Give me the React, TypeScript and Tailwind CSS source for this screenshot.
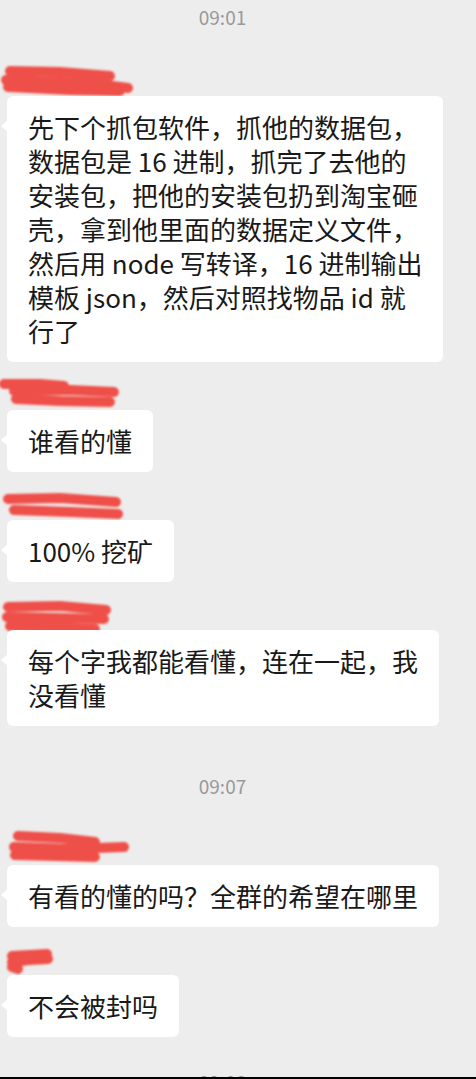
import React from "react";

type Pt = [number, number];

type Message = {
    scribble: Pt[][];
    lines: string[];
};

// name redaction strokes, coordinates local to the 30px name row
const messagesA: Message[] = [
    {
        scribble: [
            [[10, 5], [60, 6], [110, 10]],
            [[6, 14], [90, 17], [128, 22]],
            [[8, 21], [70, 24], [120, 25]],
        ],
        lines: [
            "先下个抓包软件，抓他的数据包，",
            "数据包是 16 进制，抓完了去他的",
            "安装包，把他的安装包扔到淘宝砸",
            "壳，拿到他里面的数据定义文件，",
            "然后用 node 写转译，16 进制输出",
            "模板 json，然后对照找物品 id 就",
            "行了",
        ],
    },
    {
        scribble: [
            [[4, 4], [40, 4], [64, 6]],
            [[14, 11], [70, 10], [114, 12]],
            [[16, 19], [60, 21], [110, 22]],
        ],
        lines: ["谁看的懂"],
    },
    {
        scribble: [
            [[8, 9], [60, 8], [116, 12]],
            [[14, 20], [70, 22], [118, 24]],
        ],
        lines: ["100% 挖矿"],
    },
    {
        scribble: [
            [[8, 7], [60, 6], [106, 10]],
            [[7, 17], [55, 18], [104, 19]],
            [[10, 26], [50, 27], [95, 29]],
        ],
        lines: ["每个字我都能看懂，连在一起，我", "没看懂"],
    },
];

const messagesB: Message[] = [
    {
        scribble: [
            [[18, 1], [60, 3], [95, 7]],
            [[14, 12], [70, 14], [124, 12]],
            [[15, 20], [55, 21], [95, 22]],
        ],
        lines: ["有看的懂的吗？全群的希望在哪里"],
    },
    {
        scribble: [
            [[12, 11], [30, 10], [47, 9]],
            [[12, 17], [30, 15], [48, 14]],
            [[12, 22], [18, 24]],
        ],
        lines: ["不会被封吗"],
    },
];

function Scribble({ strokes }: { strokes: Pt[][] }) {
    return (
        <svg width="140" height="30" viewBox="0 0 140 30" className="overflow-visible">
            <defs>
                <filter id="soft" filterUnits="userSpaceOnUse" x="-10" y="-15" width="160" height="60">
                    <feGaussianBlur stdDeviation="0.8" />
                </filter>
            </defs>
            <g filter="url(#soft)">
                {strokes.map((s, i) => (
                    <polyline
                        key={i}
                        points={s.map((p) => p.join(",")).join(" ")}
                        fill="none"
                        stroke="#ef5049"
                        strokeWidth="10"
                        strokeLinecap="round"
                        strokeLinejoin="round"
                    />
                ))}
            </g>
        </svg>
    );
}

function Time({ label, className }: { label: string; className?: string }) {
    return (
        <div className={`w-[445px] shrink-0 text-center text-[19px] leading-[24px] text-[#999999] ${className ?? ""}`}>
            {label}
        </div>
    );
}

function Bubble({ msg, className }: { msg: Message; className?: string }) {
    return (
        <div className={`flex flex-col shrink-0 ${className ?? ""}`}>
            <div className="h-[30px]">
                <Scribble strokes={msg.scribble} />
            </div>
            <div className="relative ml-[7px] w-fit rounded-md bg-white px-[21px] py-[14px] text-[26px] leading-[34px] text-[#191919]">
                {/* left tail */}
                <div className="absolute left-[-6px] top-[24px] h-0 w-0 border-y-[6px] border-r-[7px] border-y-transparent border-r-white" />
                {msg.lines.map((line, i) => (
                    <div key={i} className="whitespace-nowrap">
                        {line}
                    </div>
                ))}
            </div>
        </div>
    );
}

export default function App() {
    return (
        <div className="relative flex h-[1079px] w-full flex-col overflow-hidden bg-[#ededed] font-['Noto_Sans_CJK_SC','Noto_Sans',sans-serif]">
            <Time label="09:01" className="mt-[5px]" />
            {messagesA.map((m, i) => (
                <Bubble key={i} msg={m} className={i === 0 ? "mt-[37px]" : "mt-[18px]"} />
            ))}
            <Time label="09:07" className="mt-[48px]" />
            {messagesB.map((m, i) => (
                <Bubble key={i} msg={m} className={i === 0 ? "mt-[37px]" : "mt-[18px]"} />
            ))}
            <Time label="09:08" className="mt-[33px]" />
            <div className="absolute bottom-0 left-0 h-[2px] w-full bg-black" />
        </div>
    );
}
